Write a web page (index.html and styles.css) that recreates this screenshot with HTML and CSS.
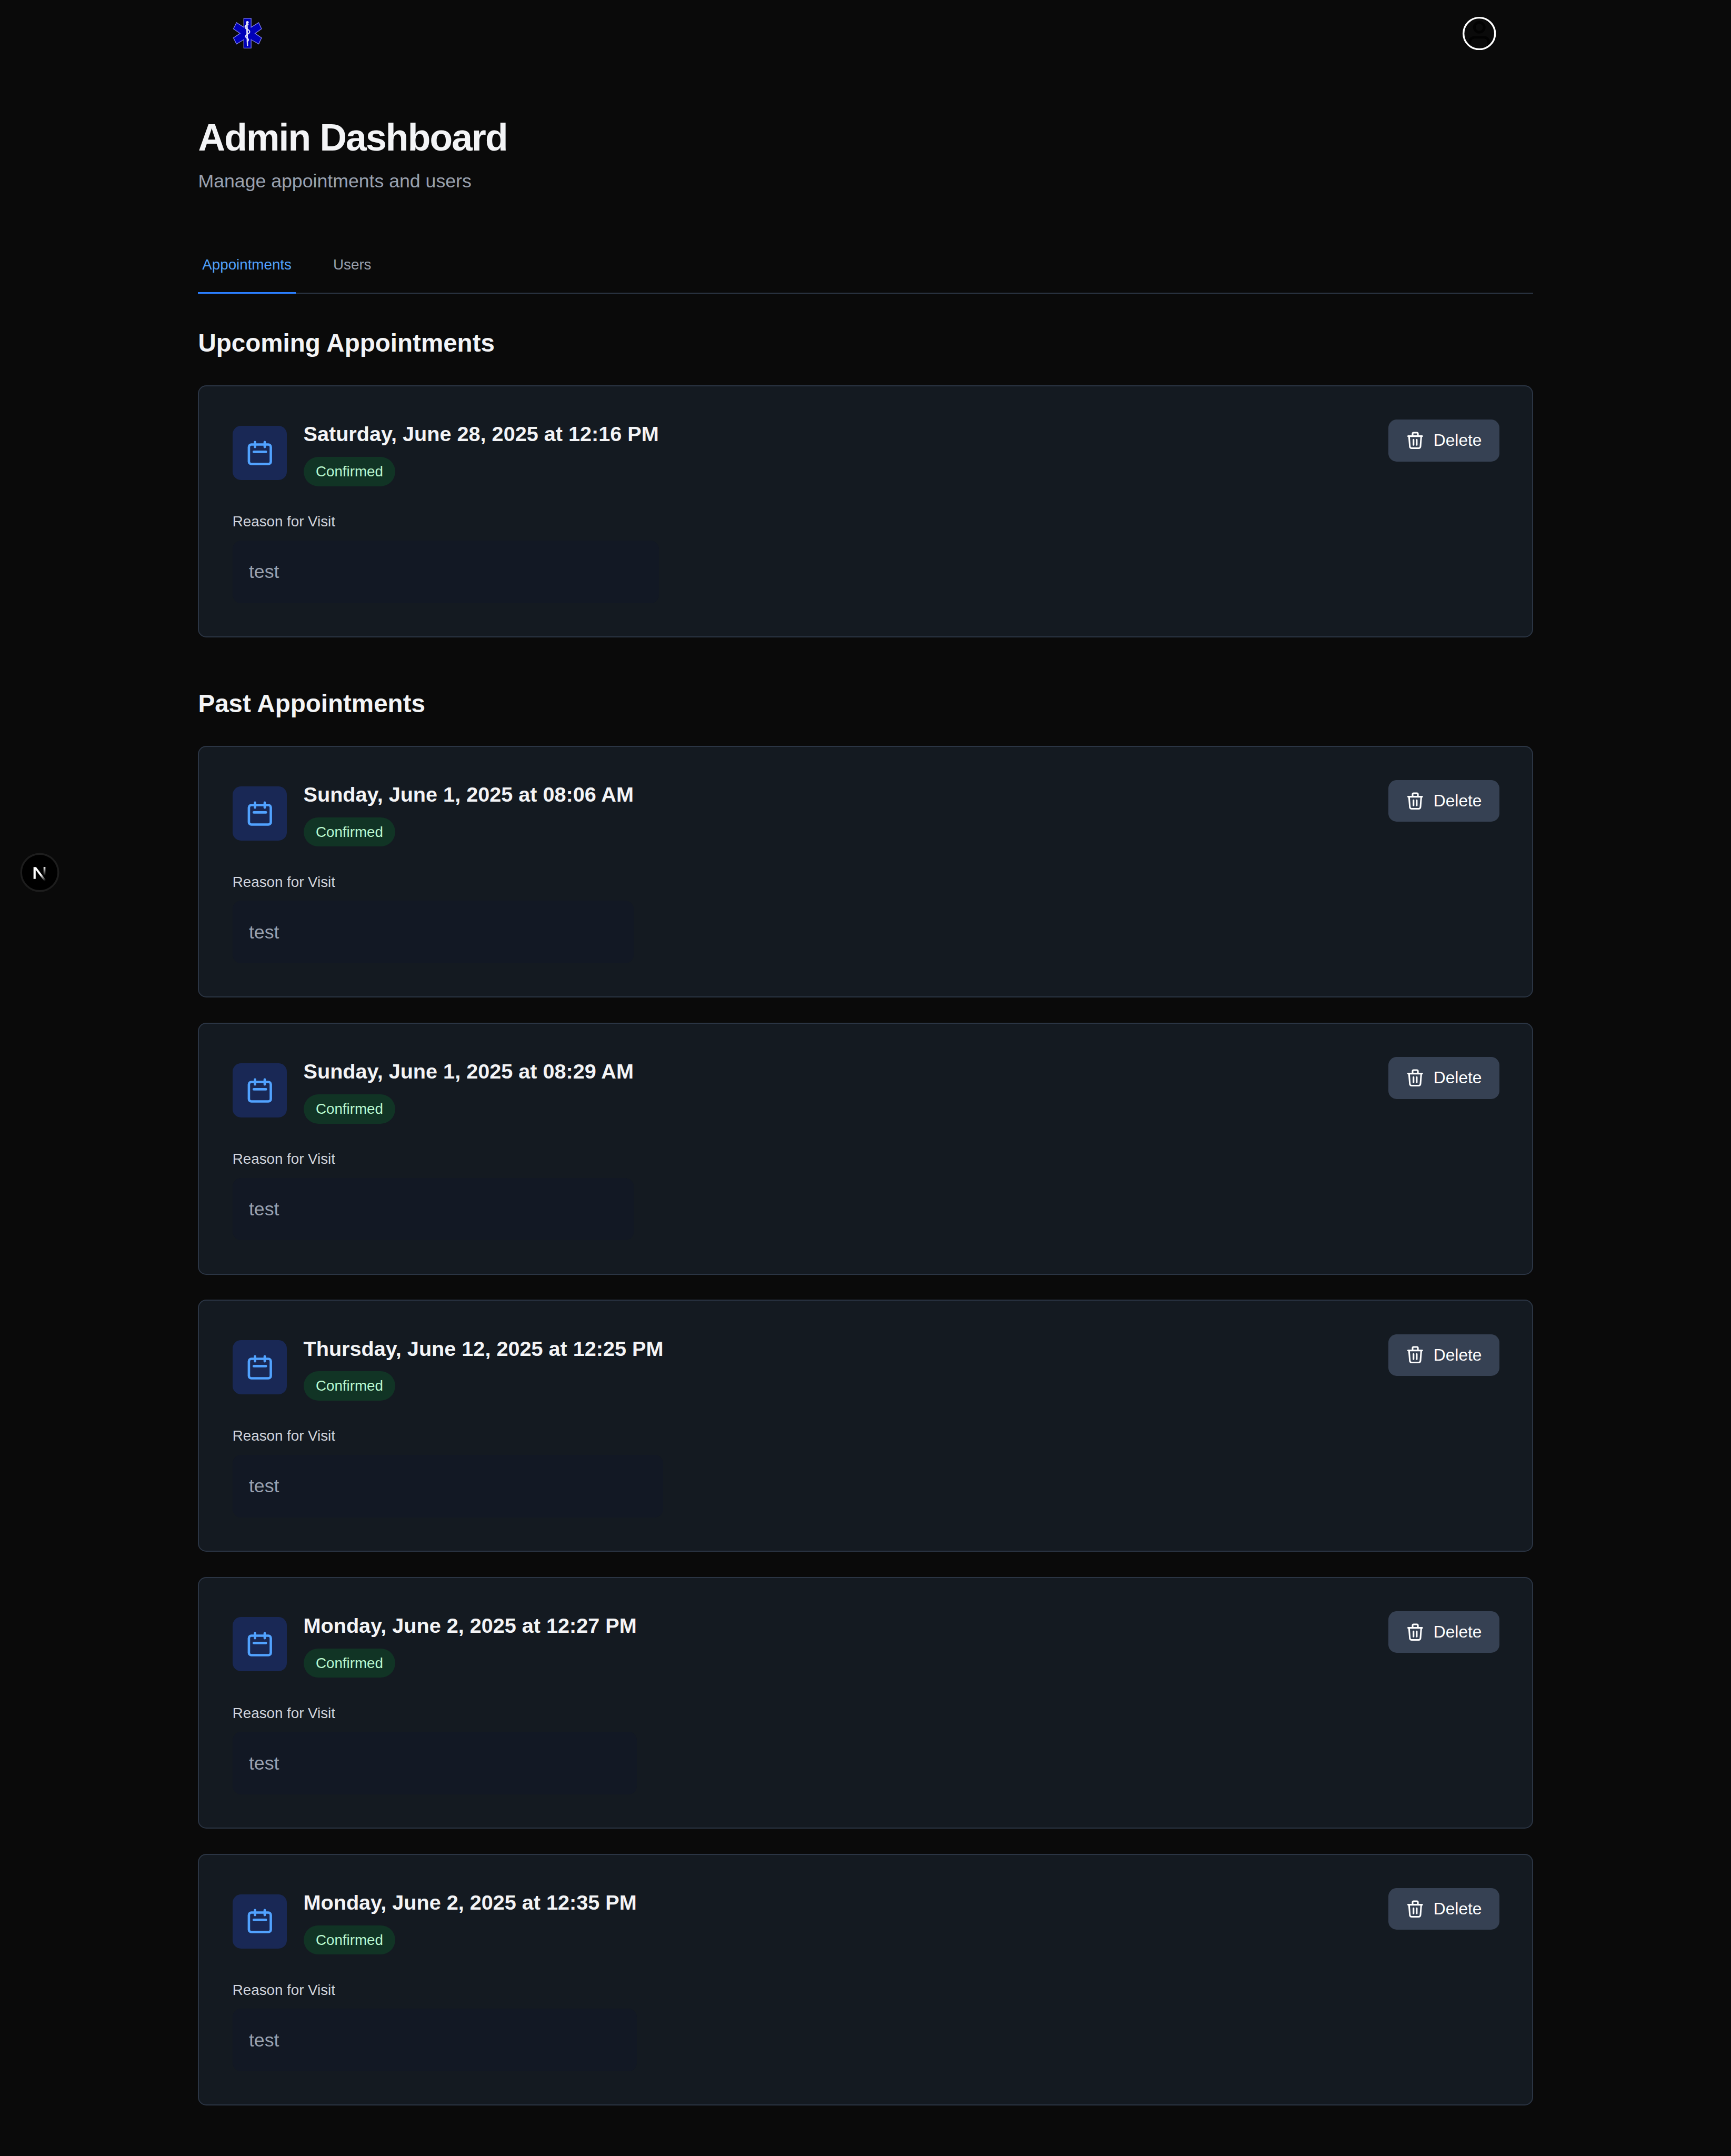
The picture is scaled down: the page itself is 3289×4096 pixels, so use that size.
FILE: index.html
```html
<!DOCTYPE html>
<html lang="en">
<head>
<meta charset="utf-8">
<title>Admin Dashboard</title>
<link rel="stylesheet" href="styles.css">
</head>
<body>
<svg class="sprite" aria-hidden="true">
  <symbol id="calendar" viewBox="0 0 24 24"><path d="M8 7V3m8 4V3m-9 8h10M5 21h14a2 2 0 002-2V7a2 2 0 00-2-2H5a2 2 0 00-2 2v12a2 2 0 002 2z"/></symbol>
  <symbol id="trash" viewBox="0 0 32 36"><path d="M2.500 9.700h27M11.100 9V5a2 2 0 0 1 2-2h6.200a2 2 0 0 1 2 2v4M4.300 9.700l1.500 19.800a3.500 3.500 0 0 0 3.500 3.300h13.400a3.500 3.500 0 0 0 3.500-3.300l1.500-19.800M12.900 16.500v10M19.100 16.500v10"/></symbol>
</svg>
<header class="topbar">
  <svg class="logo" viewBox="0 0 64 64">
    <path class="star" d="M23.500 3h14v17L52 11l5.500 12-12.500 8.700 12.500 8.600L52 52l-14.500-8.300V60h-14V43.700L9.500 52 3.500 40.300 16.300 31.700 3.500 23l6-12 14 9z"/>
    <path class="rod" d="M30.300 9.500l.9 46h-1.400l-1.500-46z"/>
    <circle class="knob" cx="30.300" cy="10.700" r="2.200"/>
    <path class="snake" d="M32.500 15.500c-4-1.500-7 1.500-6.300 5 .8 3.500 8.800 3.500 8.500 8.500-.3 4-7.500 4.500-7.700 8.500-.2 3.500 5.500 3.300 5.400 6.500 0 2-2 2-2.400 4"/>
  </svg>
  <svg class="avatar" viewBox="0 0 64 64">
    <path class="person" d="M14 52v-4.500a8 8 0 0 1 8-8h20a8 8 0 0 1 8 8V52M32 10.500a9.500 9.500 0 1 1 0 19 9.500 9.500 0 0 1 0-19z"/>
    <circle class="ring" cx="32" cy="32" r="30.300"/>
  </svg>
</header>
<main class="page">
  <h1 class="title">Admin Dashboard</h1>
  <p class="subtitle">Manage appointments and users</p>
  <nav class="tabs"><a class="tab active">Appointments</a><a class="tab">Users</a></nav>
  <section class="group">
    <h2 class="heading">Upcoming Appointments</h2>
    <article class="card"><div class="info"><div class="summary"><span class="tile"><svg class="cal"><use href="#calendar"/></svg></span><div class="when"><h3 class="date">Saturday, June 28, 2025 at 12:16 PM</h3><span class="badge">Confirmed</span></div></div><h4 class="label">Reason for Visit</h4><p class="reason">test</p></div><button class="delete"><svg class="bin"><use href="#trash"/></svg>Delete</button></article>
  </section>
  <section class="group">
    <h2 class="heading">Past Appointments</h2>
    <article class="card"><div class="info"><div class="summary"><span class="tile"><svg class="cal"><use href="#calendar"/></svg></span><div class="when"><h3 class="date">Sunday, June 1, 2025 at 08:06 AM</h3><span class="badge">Confirmed</span></div></div><h4 class="label">Reason for Visit</h4><p class="reason">test</p></div><button class="delete"><svg class="bin"><use href="#trash"/></svg>Delete</button></article>
    <article class="card"><div class="info"><div class="summary"><span class="tile"><svg class="cal"><use href="#calendar"/></svg></span><div class="when"><h3 class="date">Sunday, June 1, 2025 at 08:29 AM</h3><span class="badge">Confirmed</span></div></div><h4 class="label">Reason for Visit</h4><p class="reason">test</p></div><button class="delete"><svg class="bin"><use href="#trash"/></svg>Delete</button></article>
    <article class="card"><div class="info"><div class="summary"><span class="tile"><svg class="cal"><use href="#calendar"/></svg></span><div class="when"><h3 class="date">Thursday, June 12, 2025 at 12:25 PM</h3><span class="badge">Confirmed</span></div></div><h4 class="label">Reason for Visit</h4><p class="reason">test</p></div><button class="delete"><svg class="bin"><use href="#trash"/></svg>Delete</button></article>
    <article class="card"><div class="info"><div class="summary"><span class="tile"><svg class="cal"><use href="#calendar"/></svg></span><div class="when"><h3 class="date">Monday, June 2, 2025 at 12:27 PM</h3><span class="badge">Confirmed</span></div></div><h4 class="label">Reason for Visit</h4><p class="reason">test</p></div><button class="delete"><svg class="bin"><use href="#trash"/></svg>Delete</button></article>
    <article class="card"><div class="info"><div class="summary"><span class="tile"><svg class="cal"><use href="#calendar"/></svg></span><div class="when"><h3 class="date">Monday, June 2, 2025 at 12:35 PM</h3><span class="badge">Confirmed</span></div></div><h4 class="label">Reason for Visit</h4><p class="reason">test</p></div><button class="delete"><svg class="bin"><use href="#trash"/></svg>Delete</button></article>
  </section>
</main>
<svg class="devtools" viewBox="0 0 76 76">
  <defs>
    <linearGradient id="fadeA" gradientUnits="userSpaceOnUse" x1="40" y1="42" x2="49" y2="54"><stop offset="0" stop-color="#fff"/><stop offset="1" stop-color="#fff" stop-opacity="0"/></linearGradient>
    <linearGradient id="fadeB" gradientUnits="userSpaceOnUse" x1="0" y1="27" x2="0" y2="44"><stop offset="0" stop-color="#fff"/><stop offset="1" stop-color="#fff" stop-opacity="0"/></linearGradient>
  </defs>
  <circle cx="38" cy="38" r="35.800" fill="#000" stroke="#1d1d1d" stroke-width="3.500"/>
  <path d="M26 27.500h5L51 54l-3 2.500-17.800-23.500V50.500H26z" fill="url(#fadeA)"/>
  <path d="M45.300 27.500h3.700v16h-3.700z" fill="url(#fadeB)"/>
</svg>
</body>
</html>
```
FILE: styles.css
```css
/* 1rem is sixteen design pixels */
html { font-size: 31.7012px; }
* { box-sizing: border-box; margin: 0; padding: 0; }
body { background: #0a0a0a; color: #f3f4f6; font-family: "Liberation Sans", Arial, sans-serif; height: 4096px; overflow: hidden; }
.sprite { display: none; }
.topbar { width: 80rem; height: 4rem; margin: 0 auto; padding: 0 2.22rem 0 2rem; display: flex; align-items: center; justify-content: space-between; }
.logo, .avatar { width: 2rem; height: 2rem; }
.star { fill: #0000b8; stroke: #8080e8; stroke-width: 1.3; }
.rod, .knob { fill: #e4e4f8; stroke: #e4e4f8; stroke-width: 1; }
.snake { fill: none; stroke: #e4e4f8; stroke-width: 2.2; }
.ring { fill: none; stroke: #fff; stroke-width: 3.4; }
.person { fill: none; stroke: #020202; stroke-width: 5; }
.page { width: 80.02rem; margin: 0 0 0 376.45px; padding-top: 3rem; }
.title { font-size: 2.25rem; line-height: 2.5rem; letter-spacing: -0.025em; font-weight: 700; }
.subtitle { margin-top: .5rem; font-size: 1.125rem; line-height: 1.75rem; color: #99a1af; }
.tabs { margin-top: 2.5rem; display: flex; gap: 2rem; height: 3.34375rem; border-bottom: 2px solid #2b3544; }
.tab { height: 3.34375rem; padding: 1rem .25rem; font-size: .875rem; line-height: 1.25rem; color: #99a1af; }
.tab.active { color: #51a2ff; border-bottom: 3px solid #2b7fff; }
.group { margin-top: 2rem; }
.group + .group { margin-top: 3rem; }
.heading { font-size: 1.5rem; line-height: 1.94rem; font-weight: 700; margin-bottom: 1.56rem; }
.card { display: flex; justify-content: space-between; align-items: flex-start; height: 15.1rem; padding: 2rem; border: 2px solid #2b3544; border-radius: .5rem; background: #141a21; }
.card + .card { margin-top: 1.5rem; }
.summary { display: flex; align-items: center; gap: 1rem; }
.tile { display: flex; padding: .75rem; border-radius: .5rem; background: #192855; }
.cal { width: 1.75rem; height: 1.75rem; fill: none; stroke: #51a2ff; stroke-width: 2; stroke-linecap: round; stroke-linejoin: round; }
.when { display: flex; flex-direction: column; align-items: flex-start; gap: .48rem; }
.date { font-size: 1.25rem; line-height: 1.75rem; font-weight: 700; }
.badge { padding: .25rem .74rem; border-radius: 1rem; background: #113425; color: #b9f8cf; font-size: .875rem; line-height: 1.25rem; }
.label { margin-top: 1.5rem; font-size: .875rem; line-height: 1.25rem; font-weight: 400; color: #d1d5dc; }
.reason { margin-top: .5rem; padding: 1.03rem .98rem .97rem; border-radius: .5rem; background: #121824; color: #99a1af; font-size: 1.125rem; line-height: 1.75rem; }
.delete { display: flex; align-items: center; gap: .59rem; width: 6.66rem; height: 2.5rem; margin-right: -1px; padding-left: 1.13rem; border: 0; border-radius: .5rem; background: #364153; color: #fff; font: 1rem/1.5rem "Liberation Sans", Arial, sans-serif; }
.bin { width: 1rem; height: 1.125rem; fill: none; stroke: #fff; stroke-width: 3.1; stroke-linecap: round; stroke-linejoin: round; }
/* floating badge over the page's left edge */
.devtools { position: fixed; left: 38px; top: 1620px; width: 75px; height: 75px; }
```
